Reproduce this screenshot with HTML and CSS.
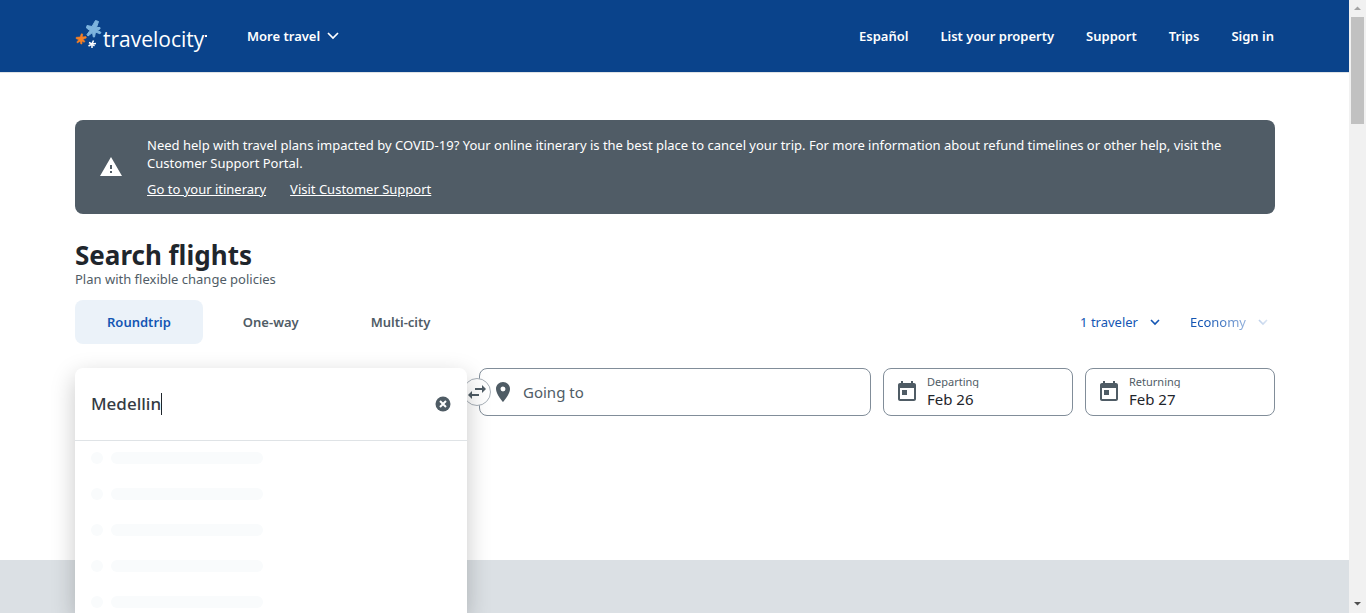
FILE: index.html
```html
<!DOCTYPE html>
<html lang="en">
<head>
<meta charset="utf-8">
<meta name="viewport" content="width=device-width, initial-scale=1">
<title>Search flights | Travelocity</title>
<link rel="stylesheet" href="styles.css">
</head>
<body>
<div class="page">
  <header class="site-header">
    <a class="logo" href="#" aria-label="Travelocity home">
      <svg class="logo-stars" width="28" height="30" viewBox="0 0 28 30" aria-hidden="true">
        <g stroke-linejoin="round">
          <path fill="#7db4de" stroke="#7db4de" d="M17 7.500 20.500 1.500 23.500 2.500 21.500 8.500 25 8.500 25 10 22 11 26 13.500 25 14.800 20.500 13 19.500 18 18.300 18 17.500 13.500 13 17 12 15.500 15 11.500 11.500 9 12 6.500z"/>
          <path fill="#f58025" stroke="#f58025" stroke-width=".6" d="M5.200 18 6.300 14.800 7.700 15 7.300 18 11 17.500 11.300 19 8 20.300 10 22.500 9 23.300 7 22 7 25 5.800 25 5 22.200 2.500 24 1.800 23 3.800 20.700 1 19.500 1.200 18.300z"/>
          <path fill="none" stroke="#fff" stroke-width="1.500" d="M17 25 18.500 21.500M17 25 14 23.500M17 25 21 24.500M17 25 13.500 27M17 25 17 29M17 25 19.500 27"/>
        </g>
      </svg>
      <span class="logo-word">travelocity</span>
      <span class="logo-mark"></span>
    </a>
    <button class="more-travel" type="button">More travel
      <svg width="12" height="8" viewBox="0 0 12 8" fill="none" stroke="currentColor" stroke-width="1.700" aria-hidden="true"><path d="M1 1l5 5 5-5"/></svg>
    </button>
    <nav class="site-nav" aria-label="Main">
      <a href="#">Español</a>
      <a href="#">List your property</a>
      <a href="#">Support</a>
      <a href="#">Trips</a>
      <a href="#">Sign in</a>
    </nav>
  </header>

  <main class="content">
    <section class="alert" aria-label="Travel alert">
      <svg class="alert-icon" width="24" height="24" viewBox="0 0 24 24" aria-hidden="true"><path fill="#fff" d="M1 21h22L12 2 1 21zm12-3h-2v-2h2v2zm0-4h-2v-4h2v4z"/></svg>
      <div class="alert-body">
        <p class="alert-text">Need help with travel plans impacted by COVID-19? Your online itinerary is the best place to cancel your trip. For more information about refund timelines or other help, visit the Customer Support Portal.</p>
        <div class="alert-links">
          <a href="#">Go to your itinerary</a>
          <a href="#">Visit Customer Support</a>
        </div>
      </div>
    </section>

    <h1 class="title">Search flights</h1>
    <p class="subtitle">Plan with flexible change policies</p>

    <div class="options">
      <div class="tabs" role="tablist">
        <button class="tab tab-active" type="button" role="tab" aria-selected="true">Roundtrip</button>
        <button class="tab" type="button" role="tab" aria-selected="false">One-way</button>
        <button class="tab" type="button" role="tab" aria-selected="false">Multi-city</button>
      </div>
      <div class="preferences">
        <button class="preference" type="button">1 traveler
          <svg width="10" height="7" viewBox="0 0 10 7" fill="none" stroke="currentColor" stroke-width="1.600" aria-hidden="true"><path d="M1 1l4 4 4-4"/></svg>
        </button>
        <button class="preference preference-fade" type="button">Economy
          <svg width="10" height="7" viewBox="0 0 10 7" fill="none" stroke="currentColor" stroke-width="1.600" aria-hidden="true"><path d="M1 1l4 4 4-4"/></svg>
        </button>
      </div>
    </div>

    <form class="search">
      <div class="origin">
        <div class="origin-panel">
          <div class="origin-entry">
            <input class="origin-input" type="text" value="Medellin" aria-label="Leaving from">
            <span class="caret"></span>
            <button class="clear" type="button" aria-label="Clear">
              <svg width="16" height="16" viewBox="0 0 16 16" aria-hidden="true"><circle cx="8" cy="8" r="7.500" fill="#4f5c65"/><path stroke="#fff" stroke-width="2" d="M5 5l6 6M11 5l-6 6"/></svg>
            </button>
          </div>
          <ul class="results" aria-label="Loading results">
            <li><i class="dot"></i><i class="bar"></i></li>
            <li><i class="dot"></i><i class="bar"></i></li>
            <li><i class="dot"></i><i class="bar"></i></li>
            <li><i class="dot"></i><i class="bar"></i></li>
            <li><i class="dot"></i><i class="bar"></i></li>
          </ul>
        </div>
      </div>
      <div class="destination">
        <button class="field" type="button">
          <svg class="field-icon" width="24" height="24" viewBox="0 0 24 24" aria-hidden="true"><path fill="#4f5c65" d="M12 2C8.130 2 5 5.130 5 9c0 5.250 7 13 7 13s7-7.750 7-13c0-3.870-3.130-7-7-7zm0 9.500a2.500 2.500 0 0 1 0-5 2.500 2.500 0 0 1 0 5z"/></svg>
          <span class="field-placeholder">Going to</span>
        </button>
        <button class="swap" type="button" aria-label="Swap locations">
          <svg width="20" height="16" viewBox="0 0 20 16" aria-hidden="true"><path fill="#4f5c65" d="M8 4h7V1l4 4-4 4V6H8zM12 10H5V7L1 11l4 4v-3h7z"/></svg>
        </button>
      </div>
      <div class="dates">
        <button class="field" type="button">
          <svg class="field-icon" width="24" height="24" viewBox="0 0 24 24" aria-hidden="true"><path fill="#4f5c65" fill-rule="evenodd" d="M19 3h-1V1h-2v2H8V1H6v2H5c-1.100 0-2 .9-2 2v14c0 1.100.9 2 2 2h14c1.100 0 2-.9 2-2V5c0-1.100-.9-2-2-2zm0 16H5V8h14v11zM7 10h5v5H7z"/></svg>
          <span class="field-copy"><span class="field-label">Departing</span><span class="field-value">Feb 26</span></span>
        </button>
        <button class="field" type="button">
          <svg class="field-icon" width="24" height="24" viewBox="0 0 24 24" aria-hidden="true"><path fill="#4f5c65" fill-rule="evenodd" d="M19 3h-1V1h-2v2H8V1H6v2H5c-1.100 0-2 .9-2 2v14c0 1.100.9 2 2 2h14c1.100 0 2-.9 2-2V5c0-1.100-.9-2-2-2zm0 16H5V8h14v11zM7 10h5v5H7z"/></svg>
          <span class="field-copy"><span class="field-label">Returning</span><span class="field-value">Feb 27</span></span>
        </button>
      </div>
    </form>
  </main>

  <footer class="page-end"></footer>
</div>
<div class="scrollbar" aria-hidden="true">
  <svg width="17" height="17" viewBox="0 0 17 17"><path fill="#a3a3a3" d="M5 10h7L8.500 6.500z"/></svg>
  <div class="scroll-track"><div class="scroll-thumb"></div></div>
  <svg width="17" height="17" viewBox="0 0 17 17"><path fill="#505050" d="M5 6h7L8.500 9.500z"/></svg>
</div>
</body>
</html>
```
FILE: styles.css
```css
* {
  box-sizing: border-box;
}

body {
  margin: 0;
  height: 100vh;
  display: flex;
  overflow: hidden;
  background: #fff;
  color: #1f262c;
  font-family: "Noto Sans", "Open Sans", sans-serif;
  font-size: 13px;
  line-height: 18px;
}

button,
input {
  margin: 0;
  padding: 0;
  border: 0;
  background: none;
  color: inherit;
  font: inherit;
}

a {
  color: inherit;
  text-decoration: none;
}

.page {
  flex: 1;
  min-width: 0;
  display: flex;
  flex-direction: column;
}

/* Header */

.site-header {
  display: flex;
  align-items: center;
  height: 72px;
  padding: 0 75px;
  background: #0a438b;
  color: #fff;
  font-weight: 600;
}

.logo {
  display: flex;
  align-items: center;
  width: 133px;
}

.logo-stars {
  flex: none;
  margin-top: -4px;
}

.logo-word {
  padding-top: 6px;
  font-family: "Open Sans", sans-serif;
  font-size: 21px;
  font-weight: 500;
  line-height: 28px;
}

.logo-mark {
  width: 2px;
  height: 2px;
  margin-left: 1px;
  background: #fff;
}

.more-travel {
  display: flex;
  align-items: center;
  gap: 7px;
  margin-left: 39px;
}

.site-nav {
  display: flex;
  gap: 32px;
  margin-left: auto;
}

/* Main column */

.content {
  flex: none;
  height: 488px;
  padding: 47px 74px 0 75px;
  border-top: 1px solid #dfe3e6;
}

.alert {
  display: flex;
  align-items: center;
  gap: 24px;
  padding: 16px 24px;
  border-radius: 8px;
  background: #505c66;
  color: #fff;
}

.alert-icon {
  flex: none;
}

.alert-text {
  margin: 0;
}

.alert-links {
  display: flex;
  gap: 24px;
  margin-top: 8px;
}

.alert-links a {
  text-decoration: underline;
}

.title {
  margin: 24px 0 0;
  font-size: 26px;
  font-weight: 700;
  line-height: 34px;
}

.subtitle {
  margin: -2px 0 0;
  color: #505c66;
}

.options {
  display: flex;
  align-items: center;
  justify-content: space-between;
  margin-top: 12px;
}

.tabs {
  display: flex;
  gap: 8px;
}

.tab {
  height: 44px;
  padding: 0 32px;
  border-radius: 8px;
  color: #505c66;
  font-weight: 600;
}

.tab-active {
  background: #ebf2f9;
  color: #1456b4;
}

.preferences {
  display: flex;
  gap: 30px;
  padding-right: 7px;
  color: #1456b4;
}

.preference {
  display: flex;
  align-items: center;
  gap: 12px;
}

.preference-fade {
  -webkit-mask-image: linear-gradient(90deg, #000 20%, rgba(0, 0, 0, 0.15));
  mask-image: linear-gradient(90deg, #000 20%, rgba(0, 0, 0, 0.15));
}

/* Search form */

.search {
  display: grid;
  grid-template-columns: repeat(3, minmax(0, 1fr));
  gap: 12px;
  margin-top: 24px;
}

.origin,
.destination {
  position: relative;
}

.origin {
  z-index: 2;
}

.origin-panel {
  position: absolute;
  top: 0;
  left: 0;
  width: 100%;
  height: 245px;
  border-radius: 8px 8px 0 0;
  background: #fff;
  box-shadow: 0 8px 24px rgba(0, 0, 0, 0.22);
}

.origin-entry {
  display: flex;
  align-items: center;
  height: 73px;
  padding: 0 16px;
  border-bottom: 1px solid #dfe3e6;
}

.origin-input {
  field-sizing: content;
  outline: 0;
  color: #343b43;
  font-size: 17px;
  font-weight: 500;
  line-height: 24px;
}

.caret {
  width: 1px;
  height: 22px;
  background: #1f262c;
}

.clear {
  display: flex;
  margin-left: auto;
}

.results {
  display: grid;
  gap: 24px;
  margin: 0;
  padding: 11px 16px 0;
  list-style: none;
}

.results li {
  display: flex;
  gap: 8px;
}

.dot,
.bar {
  height: 12px;
  border-radius: 6px;
  background: #f9fbfc;
}

.dot {
  width: 12px;
}

.bar {
  width: 152px;
}

.field {
  display: flex;
  align-items: center;
  gap: 8px;
  width: 100%;
  height: 48px;
  padding: 0 11px;
  border: 1px solid #818d99;
  border-radius: 8px;
  background: #fff;
  text-align: left;
}

.field-icon {
  flex: none;
}

.field-placeholder {
  color: #505c66;
  font-size: 15px;
}

.field-copy {
  display: grid;
}

.field-label {
  height: 14px;
  overflow: hidden;
  color: #505c66;
  font-size: 11px;
  line-height: 16px;
}

.field-value {
  font-size: 15px;
  line-height: 22px;
}

.swap {
  position: absolute;
  top: 10px;
  left: -16px;
  display: grid;
  place-items: center;
  width: 28px;
  height: 28px;
  border: 1px solid #a8b0b8;
  border-radius: 50%;
  background: #fff;
}

.dates {
  display: grid;
  grid-template-columns: 1fr 1fr;
  gap: 12px;
}

.page-end {
  flex: 1;
  background: #dbe0e4;
}

/* Scrollbar */

.scrollbar {
  display: flex;
  flex-direction: column;
  width: 17px;
  background: #f1f1f1;
}

.scroll-track {
  flex: 1;
  padding: 0 2px;
}

.scroll-thumb {
  height: 107px;
  background: #c1c1c1;
}
```
